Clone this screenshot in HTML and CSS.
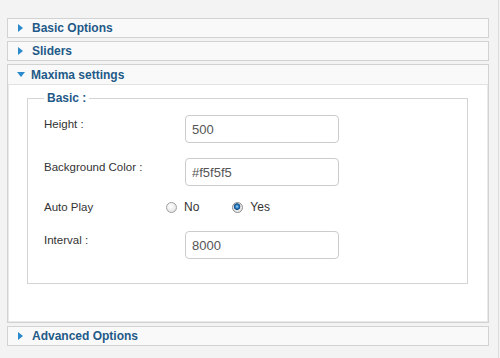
FILE: index.html
```html
<!DOCTYPE html>
<html lang="en">
<head>
    <meta charset="UTF-8">
    <meta name="viewport" content="width=device-width, initial-scale=1.0">
    <title>Maxima settings</title>
    <link rel="stylesheet" href="styles.css">
</head>
<body>
    <div class="page">
        <div class="panel">
            <h3 class="panel-title"><span class="arrow"></span>Basic Options</h3>
        </div>
        <div class="panel">
            <h3 class="panel-title"><span class="arrow"></span>Sliders</h3>
        </div>
        <div class="panel open">
            <h3 class="panel-title"><span class="arrow"></span>Maxima settings</h3>
            <div class="panel-body">
                <fieldset class="group">
                    <legend>Basic :</legend>
                    <div class="row">
                        <label for="height">Height :</label>
                        <input type="text" id="height" value="500">
                    </div>
                    <div class="row">
                        <label for="bgcolor">Background Color :</label>
                        <input type="text" id="bgcolor" value="#f5f5f5">
                    </div>
                    <div class="row radio-row">
                        <label>Auto Play</label>
                        <div class="radios">
                            <label class="radio"><input type="radio" name="autoplay" value="0"> No</label>
                            <label class="radio"><input type="radio" name="autoplay" value="1" checked> Yes</label>
                        </div>
                    </div>
                    <div class="row">
                        <label for="interval">Interval :</label>
                        <input type="text" id="interval" value="8000">
                    </div>
                </fieldset>
            </div>
        </div>
        <div class="panel">
            <h3 class="panel-title"><span class="arrow"></span>Advanced Options</h3>
        </div>
    </div>
</body>
</html>
```

FILE: styles.css
```css
body {
    margin: 0;
    background-color: #f3f3f3;
    font-family: "Liberation Sans", Arial, sans-serif;
}

.page {
    width: 499px;
    height: 358px;
    box-sizing: border-box;
    border-right: 1px solid #dcdcdc;
    padding: 18px 0 0 7px;
}

.panel {
    width: 482px;
    box-sizing: border-box;
    border: 1px solid #d2d2d2;
    box-shadow: inset 0 0 0 1px #e9e9e9;
    margin-bottom: 3px;
    background-color: #fff;
}

.panel-title {
    display: flex;
    align-items: center;
    height: 18px;
    margin: 0;
    padding-left: 10px;
    background-color: #f9f9f9;
    color: #1f5a88;
    font-size: 12px;
    font-weight: bold;
}

.arrow {
    width: 0;
    height: 0;
    margin-right: 9px;
    border-left: 5px solid #2b8acb;
    border-top: 4px solid transparent;
    border-bottom: 4px solid transparent;
}

.open .panel-title {
    height: 19px;
    border-bottom: 1px solid #e2e2e2;
}

.open .arrow {
    margin-left: -1px;
    margin-right: 6px;
    border-top: 5px solid #2b8acb;
    border-left: 4px solid transparent;
    border-right: 4px solid transparent;
    border-bottom: none;
}

.panel-body {
    padding: 6px 20px 38px 19px;
}

.group {
    margin: 0;
    padding: 10px 0 24px 16px;
    border: 1px solid #d4d4d4;
}

.group legend {
    margin-left: 0;
    padding: 0 3px;
    color: #1f5a88;
    font-size: 12px;
    font-weight: bold;
}

.row {
    display: flex;
    align-items: flex-start;
    margin-bottom: 15px;
}

.row:last-child {
    margin-bottom: 0;
}

.row > label {
    width: 141px;
    padding-top: 3px;
    color: #333;
    font-size: 11.5px;
}

.row input[type="text"] {
    width: 154px;
    height: 28px;
    box-sizing: border-box;
    padding: 0 6px;
    border: 1px solid #cccccc;
    border-radius: 4px;
    color: #555;
    font-family: "Liberation Sans", Arial, sans-serif;
    font-size: 13px;
}

.radio-row {
    align-items: center;
    margin-top: -1px;
    margin-bottom: 17px;
}

.radio-row > label {
    padding-top: 0;
}

.radios {
    display: flex;
    gap: 33px;
    margin-left: -19px;
}

.radio {
    display: flex;
    align-items: center;
    gap: 7px;
    color: #333;
    font-size: 12px;
}

.radio input {
    appearance: none;
    width: 11px;
    height: 11px;
    margin: 0;
    border: 1px solid #a0a0a0;
    border-radius: 50%;
    background: radial-gradient(circle at 40% 35%, #ffffff, #dcdcdc);
}

.radio input:checked {
    border-color: #8a8a8a;
    background: radial-gradient(circle at 45% 40%, #9fd6ff 0, #1f6fb2 2px, #174f86 3px, #e6e6e6 3.6px, #f4f4f4);
}
```
